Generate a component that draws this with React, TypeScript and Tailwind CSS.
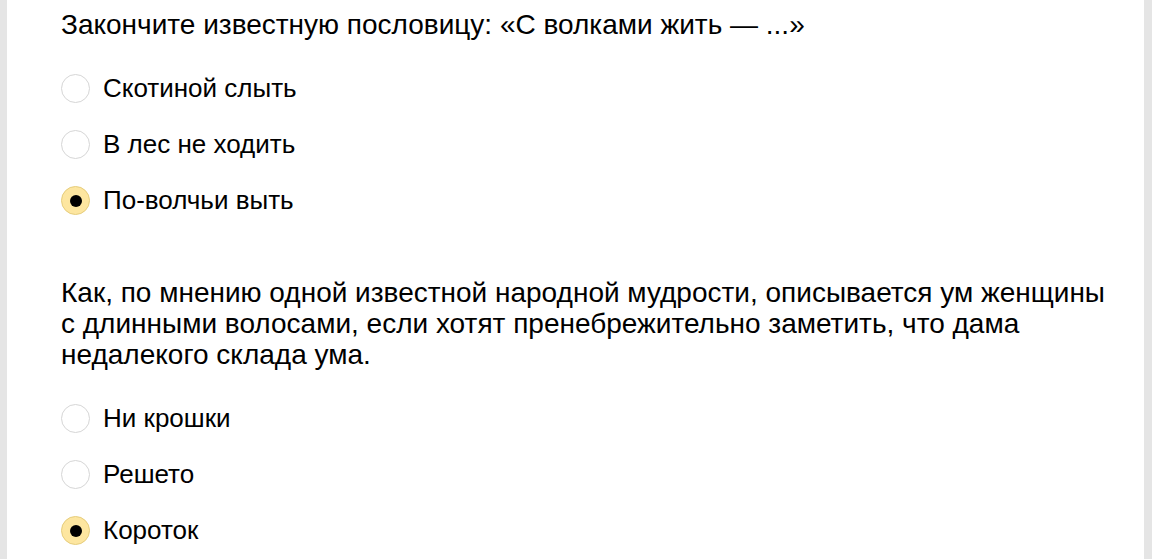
import React from "react";

type Q = { text: string; options: string[]; checked: number };

const questions: Q[] = [
  {
    text: "Закончите известную пословицу: «С волками жить — ...»",
    options: ["Скотиной слыть", "В лес не ходить", "По-волчьи выть"],
    checked: 2,
  },
  {
    text: "Как, по мнению одной известной народной мудрости, описывается ум женщины с длинными волосами, если хотят пренебрежительно заметить, что дама недалекого склада ума.",
    options: ["Ни крошки", "Решето", "Короток"],
    checked: 2,
  },
];

function Radio({ checked }: { checked: boolean }) {
  return checked ? (
    <span className="flex h-[29px] w-[29px] shrink-0 items-center justify-center rounded-full border border-[#e6cd7c] bg-[#fde6a0]">
      <span className="h-[12px] w-[12px] rounded-full bg-black" />
    </span>
  ) : (
    <span className="h-[29px] w-[29px] shrink-0 rounded-full border border-[#d6d6d6] bg-white" />
  );
}

export default function App() {
  return (
    <div
      className="flex min-h-[559px] bg-[#e5e5e5] pl-[7px] pr-[8px]"
      style={{ fontFamily: '"Liberation Sans", Arial, sans-serif' }}
    >
      <div className="flex-1 bg-white pl-[54px] pr-[28px] pt-[9px] text-black">
        {questions.map((q, qi) => (
          <div key={qi} className={qi > 0 ? "mt-[62px]" : ""}>
            <div className="mb-[34px] text-[28px] leading-[31px]">{q.text}</div>
            <div className="flex flex-col gap-[27px] text-[26px] leading-[29px]">
              {q.options.map((o, oi) => (
                <label key={oi} className="flex items-center gap-[13px]">
                  <Radio checked={oi === q.checked} />
                  <span>{o}</span>
                </label>
              ))}
            </div>
          </div>
        ))}
      </div>
    </div>
  );
}
